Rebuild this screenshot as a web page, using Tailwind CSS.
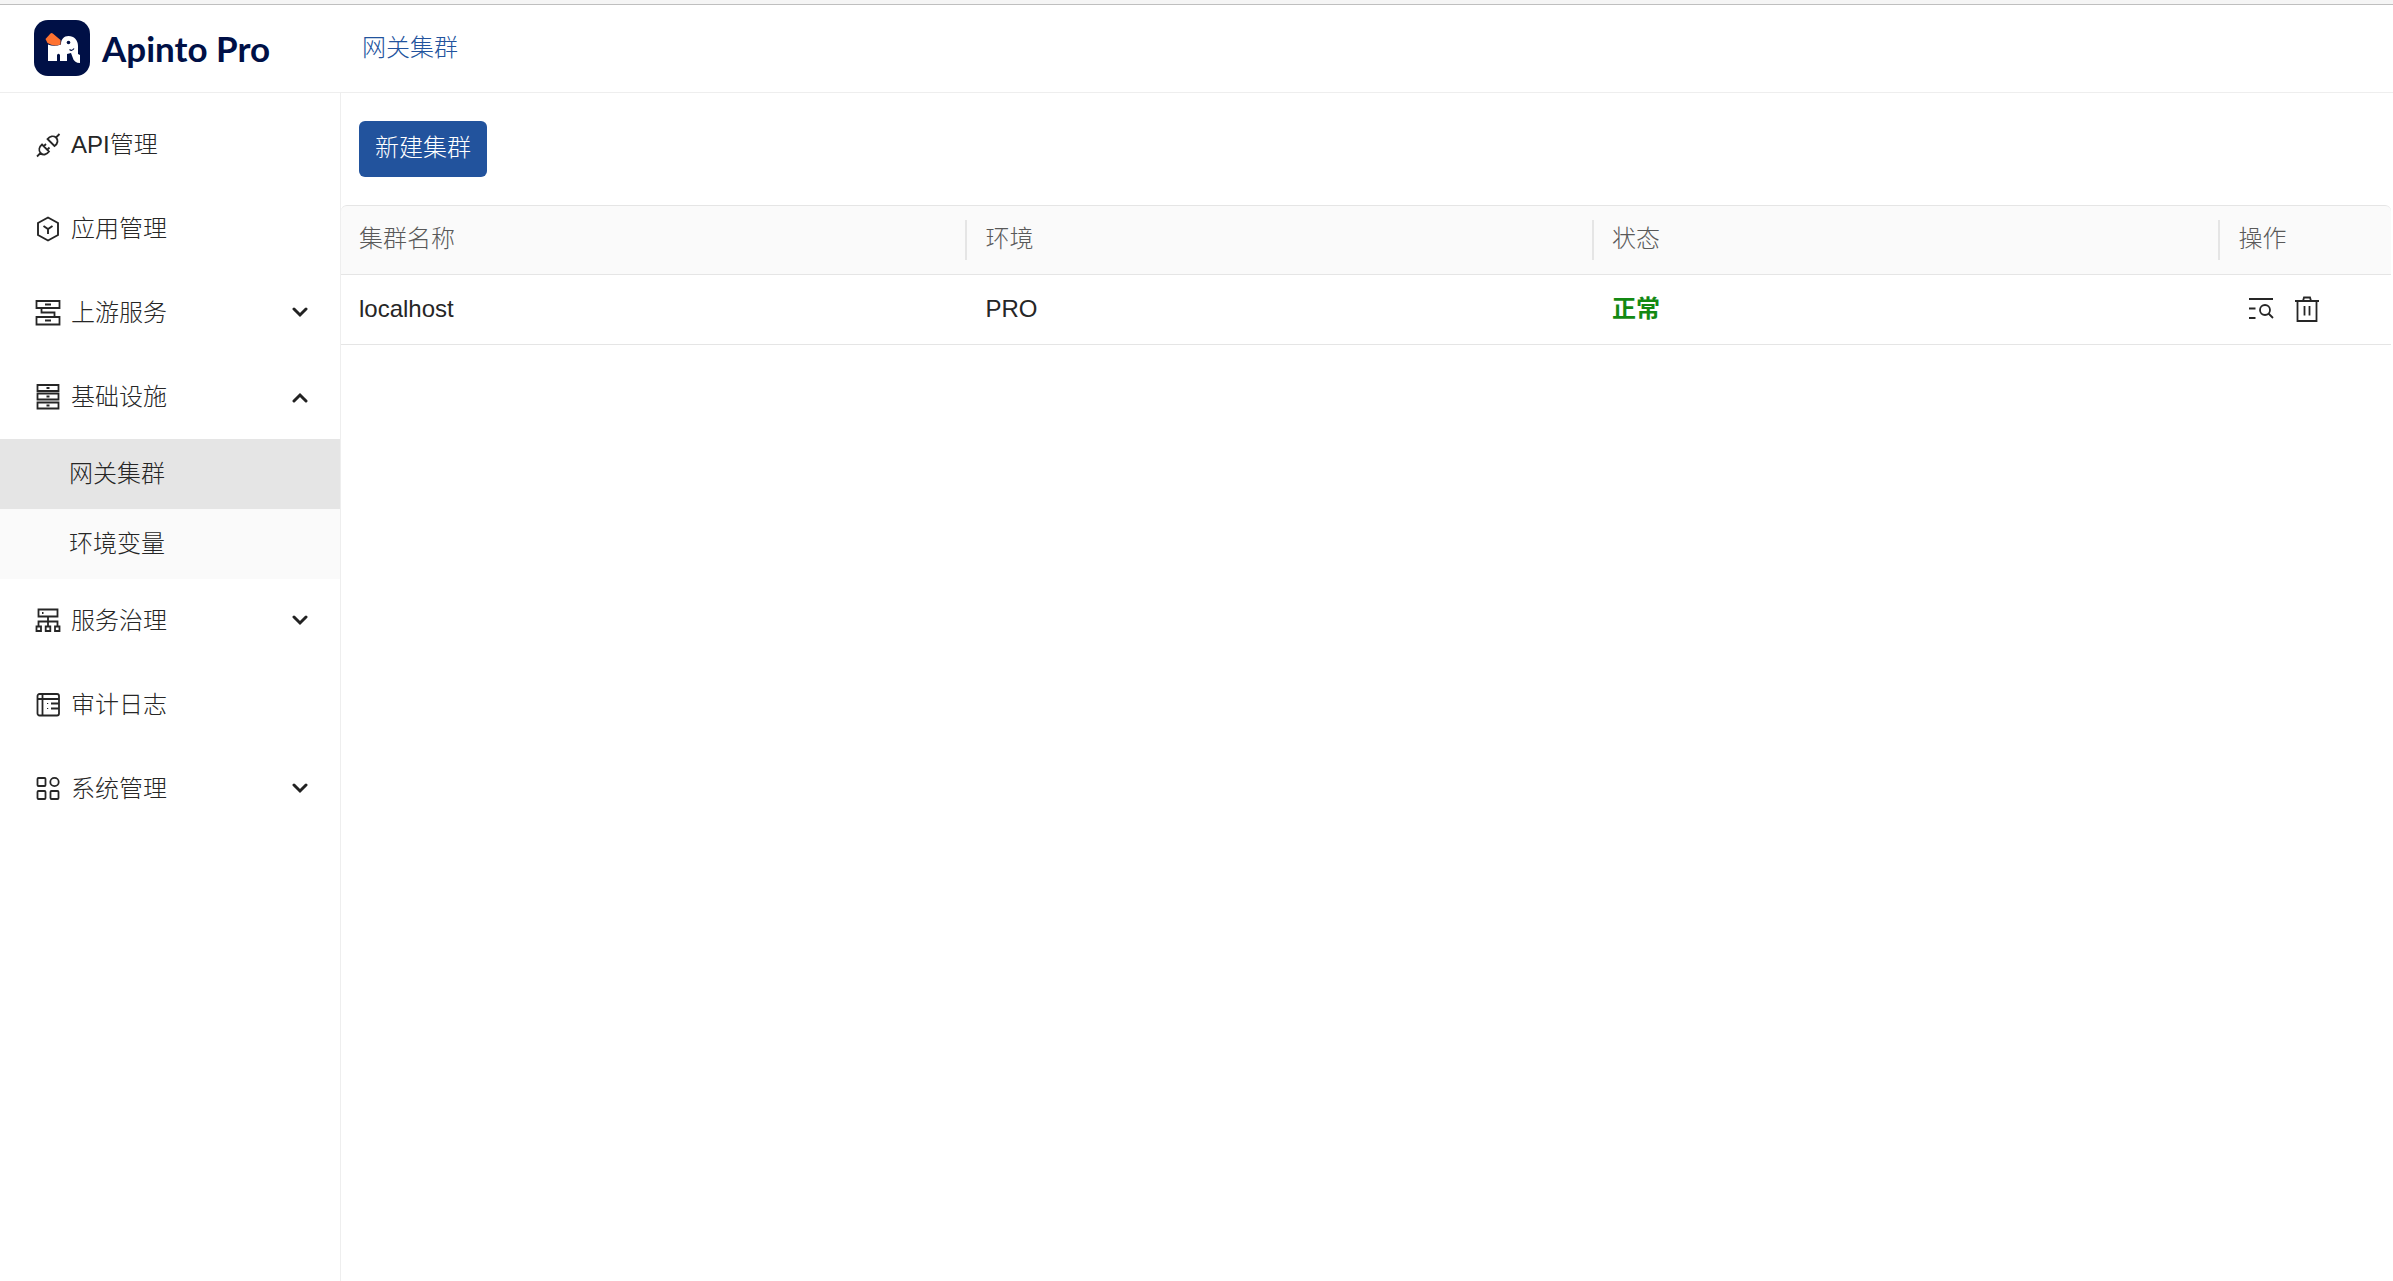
<!DOCTYPE html>
<html lang="zh-CN">
<head>
    <meta charset="UTF-8">
    <meta name="viewport" content="width=device-width, initial-scale=1.0">
    <title>网关集群 - Apinto Pro</title>
    <script src="https://cdn.jsdelivr.net/npm/@tailwindcss/browser@4"></script>
</head>
<body class="min-h-screen flex flex-col bg-white text-[#262626] text-2xl font-light font-['Liberation_Sans','Noto_Sans_CJK_SC',sans-serif]">
    <!-- Header -->
    <div class="h-[5px] bg-[#f5f5f5] border-b border-[#bfbfbf]"></div>
    <header class="h-[88px] flex items-center pb-0.5 border-b border-[#eeeeee]">
        <a href="#" class="w-[341px] shrink-0 flex items-center gap-3 pl-[34px]">
            <svg class="size-14" viewBox="0 0 56 56" aria-hidden="true">
                <rect width="56" height="56" rx="14" fill="#001046"/>
                <path fill="#fff" d="M14 24.500Q20 27 27 24.500C27 19 30 16 34.500 16C40 16 44 20 44 26V34L46 35V43C42 43 39.500 41 38.500 37L37 33L33 34V41H26V35Q24.500 32.500 23 35V41H14Z"/>
                <path fill="none" stroke="#001046" stroke-width="1.200" d="M35.500 29.500Q38 31.500 40 28.500"/>
                <circle cx="34.500" cy="22.500" r="1.800" fill="#001046"/>
                <path fill="#ff7230" d="M11.500 19L16.500 13.500Q17.500 12.500 18.800 13.500L26.500 20V24.500Q19 27 13.500 23Z"/>
            </svg>
            <span class="text-[35px] leading-10 font-bold text-[#001046] font-['Lato',sans-serif]">Apinto Pro</span>
        </a>
        <a href="#" class="pl-[21px] text-[#22539d]">网关集群</a>
    </header>

    <div class="flex grow">
        <!-- Sidebar -->
        <nav class="w-[341px] shrink-0 border-r border-[#eeeeee] pt-[10px]">
            <ul>
                <li>
                    <a href="#" class="h-[84px] flex items-center gap-[10px] pl-[35px]">
                        <svg class="size-[26px]" viewBox="0 0 26 26" fill="none" stroke="currentColor" stroke-width="1.800">
                            <path d="M2 24.500L5.500 21M21 5.500L24.500 2M7 12.500L14 19.500C11.500 23 8 23.500 5.500 21C3.500 18.500 4 15 7 12.500ZM8.500 14.500L11 12M12 18L14.500 15.500M12.500 7L19.500 14C23 11.500 23.500 8 21 5.500C18.500 3.500 15 4 12.500 7Z"/>
                        </svg>
                        API管理
                    </a>
                </li>
                <li>
                    <a href="#" class="h-[84px] flex items-center gap-[10px] pl-[35px]">
                        <svg class="size-[26px]" viewBox="0 0 26 26" fill="none" stroke="currentColor" stroke-width="1.900">
                            <path d="M13 1.500L23 7V19L13 24.500L3 19V7ZM8.500 10L13 13L17.500 10M13 13V18"/>
                        </svg>
                        应用管理
                    </a>
                </li>
                <li>
                    <button type="button" aria-expanded="false" class="w-full h-[84px] flex items-center gap-[10px] pl-[35px] pr-[31px]">
                        <svg class="size-[26px]" viewBox="0 0 26 26" fill="none" stroke="currentColor" stroke-width="1.800">
                            <path d="M1.500 1H24.500V8H1.500ZM1.500 17H24.500V24.500H1.500ZM10 4.500H16M10 20.500H16M6.500 8V12.500H19.500V17"/>
                        </svg>
                        上游服务
                        <svg class="ml-auto w-[18px] h-3" viewBox="0 0 18 12" fill="none" stroke="#222222" stroke-width="3" stroke-linecap="round"><path d="M3 2L9 8L15 2"/></svg>
                    </button>
                </li>
                <li>
                    <button type="button" aria-expanded="true" class="w-full h-[84px] flex items-center gap-[10px] pl-[35px] pr-[31px]">
                        <svg class="size-[26px]" viewBox="0 0 26 26" fill="none" stroke="currentColor" stroke-width="1.800">
                            <path d="M2.500 1H23.500V7H2.500ZM2.500 9.500H23.500V15.500H2.500ZM2.500 18.500H23.500V24.500H2.500ZM11.500 4H14.500M11.500 12.500H14.500M11.500 21.500H14.500"/>
                        </svg>
                        基础设施
                        <svg class="ml-auto w-[18px] h-3" viewBox="0 0 18 12" fill="none" stroke="#222222" stroke-width="3" stroke-linecap="round"><path d="M3 10L9 4L15 10"/></svg>
                    </button>
                    <ul class="bg-[#fafafa]">
                        <li><a href="#" aria-current="page" class="h-[70px] flex items-center pl-[69px] bg-[#e5e5e5]">网关集群</a></li>
                        <li><a href="#" class="h-[70px] flex items-center pl-[69px]">环境变量</a></li>
                    </ul>
                </li>
                <li>
                    <button type="button" aria-expanded="false" class="w-full h-[84px] flex items-center gap-[10px] pl-[35px] pr-[31px]">
                        <svg class="size-[26px]" viewBox="0 0 26 26" fill="none" stroke="currentColor" stroke-width="1.800">
                            <path d="M3.500 1.500H22.500V8.500H3.500ZM7 5H8.500M13 8.500V18M3.500 18V13.500H22.500V18M1.500 18.500H6V23H1.500ZM10.700 18.500H15.300V23H10.700ZM20 18.500H24.500V23H20Z"/>
                        </svg>
                        服务治理
                        <svg class="ml-auto w-[18px] h-3" viewBox="0 0 18 12" fill="none" stroke="#222222" stroke-width="3" stroke-linecap="round"><path d="M3 2L9 8L15 2"/></svg>
                    </button>
                </li>
                <li>
                    <a href="#" class="h-[84px] flex items-center gap-[10px] pl-[35px]">
                        <svg class="size-[26px]" viewBox="0 0 26 26" fill="none" stroke="currentColor" stroke-width="1.800">
                            <rect x="2.500" y="2" width="21.500" height="21.500" rx="2"/>
                            <path d="M7.500 2V23.500M2.500 7H24M16 11.500H24M16 16.500H24"/>
                            <path stroke-width="1.200" d="M12 11.500H13.200M12 16.500H13.200"/>
                        </svg>
                        审计日志
                    </a>
                </li>
                <li>
                    <button type="button" aria-expanded="false" class="w-full h-[84px] flex items-center gap-[10px] pl-[35px] pr-[31px]">
                        <svg class="size-[26px]" viewBox="0 0 26 26" fill="none" stroke="currentColor" stroke-width="1.800">
                            <rect x="2.500" y="2" width="8" height="8" rx="1"/>
                            <circle cx="19.500" cy="6" r="4.200"/>
                            <rect x="2.500" y="15" width="8" height="8" rx="1"/>
                            <rect x="15.500" y="15" width="8" height="8" rx="1"/>
                        </svg>
                        系统管理
                        <svg class="ml-auto w-[18px] h-3" viewBox="0 0 18 12" fill="none" stroke="#222222" stroke-width="3" stroke-linecap="round"><path d="M3 2L9 8L15 2"/></svg>
                    </button>
                </li>
            </ul>
        </nav>

        <!-- Cluster list -->
        <main class="grow pr-0.5">
            <div class="pt-7 pb-7 pl-[18px]">
                <button type="button" class="block h-14 w-32 rounded-md bg-[#22539d] pb-0.5 text-white">新建集群</button>
            </div>
            <table class="w-full table-fixed border-separate border-spacing-0 text-left">
                <colgroup>
                    <col class="w-[30.56%]">
                    <col class="w-[30.56%]">
                    <col class="w-[30.56%]">
                    <col>
                </colgroup>
                <thead class="text-[#595959]">
                    <tr class="h-[70px]">
                        <th class="p-0 font-light bg-[#fafafa] border-y border-[#e5e5e5] rounded-tl-md"><div class="h-10 flex items-center pb-0.5 pl-[18px] border-r-2 border-[#e5e5e5]">集群名称</div></th>
                        <th class="p-0 font-light bg-[#fafafa] border-y border-[#e5e5e5]"><div class="h-10 flex items-center pb-0.5 pl-[18px] border-r-2 border-[#e5e5e5]">环境</div></th>
                        <th class="p-0 font-light bg-[#fafafa] border-y border-[#e5e5e5]"><div class="h-10 flex items-center pb-0.5 pl-[18px] border-r-2 border-[#e5e5e5]">状态</div></th>
                        <th class="p-0 font-light bg-[#fafafa] border-y border-[#e5e5e5] rounded-tr-md"><div class="h-10 flex items-center pb-0.5 pl-[18px]">操作</div></th>
                    </tr>
                </thead>
                <tbody>
                    <tr class="h-[70px]">
                        <td class="p-0 pb-0.5 pl-[18px] border-b border-[#e5e5e5]">localhost</td>
                        <td class="p-0 pb-0.5 pl-[18px] border-b border-[#e5e5e5]">PRO</td>
                        <td class="p-0 pb-0.5 pl-[18px] border-b border-[#e5e5e5] font-bold text-[#138913]">正常</td>
                        <td class="p-0 pb-0.5 pl-7 border-b border-[#e5e5e5]">
                            <div class="flex items-center gap-5">
                                <button type="button" aria-label="查看">
                                    <svg class="size-[26px]" viewBox="0 0 26 26" fill="none" stroke="currentColor" stroke-width="1.800">
                                        <path d="M1 3H25M1 12.500H7.500M1 22H7.500M20.500 17.500L25 22"/>
                                        <circle cx="17" cy="14" r="5"/>
                                    </svg>
                                </button>
                                <button type="button" aria-label="删除">
                                    <svg class="size-[26px]" viewBox="0 0 26 26" fill="none" stroke="currentColor" stroke-width="1.800">
                                        <path d="M1 5H25M3.500 5V25H22.500V5M9 5L10 1.500H16L17 5M10.500 10V19.500M15.500 10V19.500"/>
                                    </svg>
                                </button>
                            </div>
                        </td>
                    </tr>
                </tbody>
            </table>
        </main>
    </div>
</body>
</html>
